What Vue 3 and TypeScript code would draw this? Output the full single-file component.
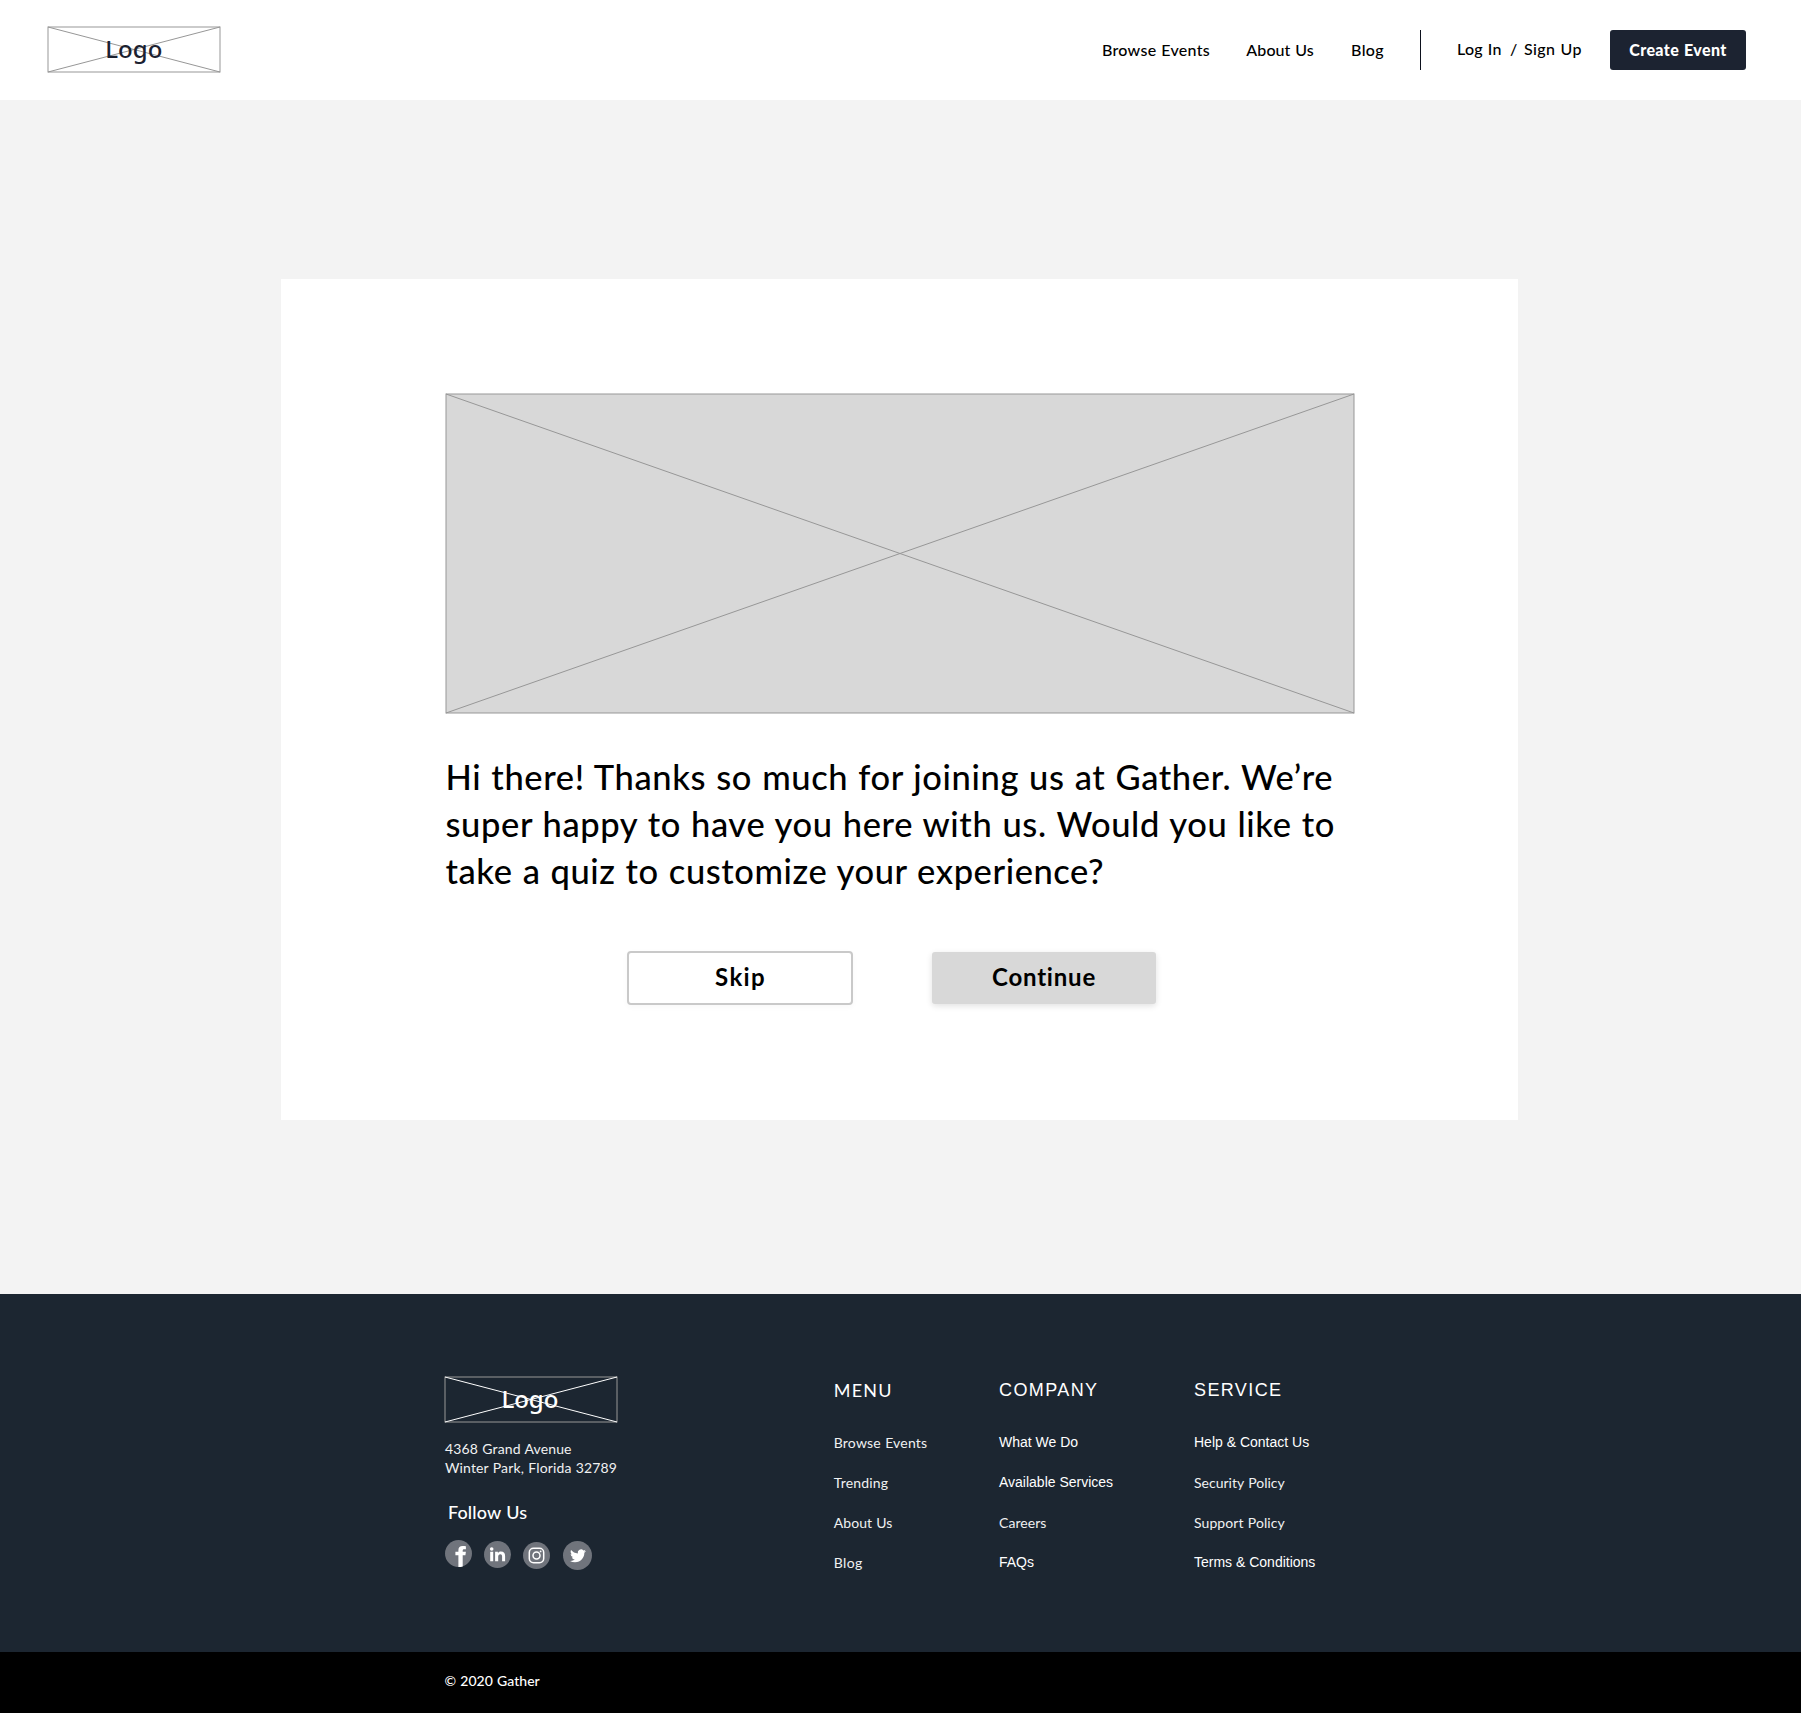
<script setup lang="ts">
interface FooterLink {
  label: string
  alt?: boolean
  spacing?: number
}

interface FooterColumn {
  title: string
  alt?: boolean
  links: FooterLink[]
}

const introLines = [
  { text: 'Hi there! Thanks so much for joining us at Gather. We’re', spacing: 0.6 },
  { text: 'super happy to have you here with us. Would you like to', spacing: 0.61 },
  { text: 'take a quiz to customize your experience?', spacing: 0.57 },
]

const columns: FooterColumn[] = [
  {
    title: 'MENU',
    links: [
      { label: 'Browse Events', spacing: 0.18 },
      { label: 'Trending', spacing: 0.18 },
      { label: 'About Us', spacing: 0.04 },
      { label: 'Blog', spacing: 0.35 },
    ],
  },
  {
    title: 'COMPANY',
    alt: true,
    links: [
      { label: 'What We Do', alt: true },
      { label: 'Available Services', alt: true },
      { label: 'Careers', spacing: 0.05 },
      { label: 'FAQs', alt: true },
    ],
  },
  {
    title: 'SERVICE',
    alt: true,
    links: [
      { label: 'Help & Contact Us', alt: true },
      { label: 'Security Policy', spacing: 0.02 },
      { label: 'Support Policy', spacing: 0.08 },
      { label: 'Terms & Conditions', alt: true },
    ],
  },
]
</script>

<template>
  <div class="page">
    <header class="header">
      <svg class="logo" width="174" height="47" viewBox="0 0 174 47">
        <rect x="1" y="1" width="172" height="45" />
        <path d="M1 1L173 46M173 1L1 46" />
        <text x="58.3" y="32">Logo</text>
      </svg>
      <nav class="nav">
        <a class="wide">Browse Events</a>
        <a class="about-link">About Us</a>
        <a class="blog">Blog</a>
        <span class="divider"></span>
        <a class="auth">Log In</a>
        <span class="auth">/</span>
        <a class="auth signup">Sign Up</a>
        <button class="create">Create Event</button>
      </nav>
    </header>

    <main class="main">
      <section class="card">
        <svg class="placeholder" width="910" height="321" viewBox="0 0 910 321">
          <rect x="1" y="1" width="908" height="319" />
          <path d="M1 1L909 320M909 1L1 320" />
        </svg>
        <p class="intro">
          <span v-for="line in introLines" :key="line.text" :style="{ letterSpacing: line.spacing + 'px' }">{{ line.text }}</span>
        </p>
        <div class="actions">
          <button class="btn skip">Skip</button>
          <button class="btn continue">Continue</button>
        </div>
      </section>
    </main>

    <footer class="footer">
      <div class="about">
        <svg class="logo light" width="174" height="47" viewBox="0 0 174 47">
          <rect x="1" y="1" width="172" height="45" />
          <path d="M1 1L173 46M173 1L1 46" />
          <text x="57.4" y="32">Logo</text>
        </svg>
        <address class="address">
          <span>4368 Grand Avenue</span>
          <span>Winter Park, Florida 32789</span>
        </address>
        <div class="follow">Follow Us</div>
        <div class="social">
          <svg width="27" height="27" viewBox="0 0 27 27">
            <circle cx="13.5" cy="13.5" r="13.5" />
            <path d="M13.4 27V15.3h-3v-3.6h3V10c0-2.7 1.6-4 4.1-4 1.2 0 2.3.1 3.4.2v3.1h-1.7c-1.2 0-1.5.6-1.5 1.5v.9h3.2l-.5 3.6h-2.7V26.4C16.3 26.8 14.9 27 13.4 27z" />
          </svg>
          <svg width="27" height="27" viewBox="0 0 27 27">
            <circle cx="13.5" cy="13.5" r="13.5" />
            <circle class="glyph" cx="7.7" cy="8" r="1.8" />
            <path d="M6.2 10.8h3V20.2h-3zM11.1 10.8h2.8v1.3c.5-.9 1.5-1.5 3-1.5 3 0 4.2 1.7 4.2 4.5V20.2h-3v-4.7c0-1.3-.4-2.3-1.7-2.3-1.5 0-2.2.9-2.2 2.4V20.2h-3.1z" />
          </svg>
          <svg width="27" height="27" viewBox="0 0 27 27">
            <circle cx="13.5" cy="13.5" r="13.5" />
            <rect class="line" x="6.3" y="6.3" width="14.4" height="14.4" rx="4.2" />
            <circle class="line" cx="13.5" cy="13.5" r="3.5" />
            <circle class="glyph" cx="17.6" cy="9.4" r="0.9" />
          </svg>
          <svg width="29" height="29" viewBox="0 0 29 29">
            <circle cx="14.5" cy="14.5" r="14.5" />
            <path transform="translate(7 6.9) scale(.665)" d="M23.953 4.57a10 10 0 01-2.825.775 4.958 4.958 0 002.163-2.723c-.951.555-2.005.959-3.127 1.184a4.92 4.92 0 00-8.384 4.482C7.69 8.095 4.067 6.13 1.64 3.162a4.822 4.822 0 00-.666 2.475c0 1.71.87 3.213 2.188 4.096a4.904 4.904 0 01-2.228-.616v.06a4.923 4.923 0 003.946 4.827 4.996 4.996 0 01-2.212.085 4.936 4.936 0 004.604 3.417 9.867 9.867 0 01-6.102 2.105c-.39 0-.779-.023-1.17-.067a13.995 13.995 0 007.557 2.209c9.053 0 13.998-7.496 13.998-13.985 0-.21 0-.42-.015-.63A9.935 9.935 0 0024 4.59z" />
          </svg>
        </div>
      </div>
      <div v-for="col in columns" :key="col.title" class="column">
        <h2 :class="{ alt: col.alt }">{{ col.title }}</h2>
        <ul>
          <li v-for="link in col.links" :key="link.label" :class="{ alt: link.alt }" :style="{ letterSpacing: (link.spacing ?? 0) + 'px' }">{{ link.label }}</li>
        </ul>
      </div>
    </footer>

    <div class="copyright">© 2020 Gather</div>
  </div>
</template>

<style>
body {
  margin: 0;
}
</style>

<style scoped>
.page {
  width: 1801px;
  height: 1713px;
  display: flex;
  flex-direction: column;
  overflow: hidden;
  background: #f3f3f3;
  color: #000;
  font-family: Lato, "Noto Sans", sans-serif;
  word-spacing: 0.6px;
}

button {
  font-family: inherit;
  word-spacing: inherit;
  margin: 0;
}

.header {
  box-sizing: border-box;
  flex: none;
  height: 100px;
  padding: 0 55px 0 47px;
  display: flex;
  justify-content: space-between;
  background: #fff;
}

.logo {
  display: block;
  margin-top: 26px;
  fill: none;
}

.logo rect {
  stroke: #979797;
}

.logo path {
  stroke: #979797;
}

.logo text {
  fill: #1b2130;
  font: 500 24px "Noto Sans", sans-serif;
}

.nav {
  display: grid;
  grid-template-columns: 145px 104px 69px 37px 53px 14px 86px 136px;
  align-items: center;
  font-size: 16px;
  font-weight: 500;
  line-height: 20px;
  white-space: nowrap;
}

.wide {
  letter-spacing: 0.28px;
}

.about-link {
  margin-left: -0.7px;
  letter-spacing: 0.1px;
}

.blog {
  letter-spacing: 0.4px;
}

.divider {
  width: 1px;
  height: 40px;
  background: #0c111d;
}

.auth {
  padding-bottom: 2px;
  letter-spacing: 0.25px;
}

.signup {
  letter-spacing: 0.4px;
}

.create {
  height: 40px;
  padding: 0 0 2px;
  border: 0;
  border-radius: 3px;
  background: #1c2331;
  color: #fff;
  font-size: 16px;
  font-weight: 900;
  letter-spacing: 0.4px;
}

.main {
  box-sizing: border-box;
  flex: none;
  height: 1194px;
  padding: 179px 283px 174px 281px;
}

.card {
  box-sizing: border-box;
  height: 841px;
  padding: 114px 0 0 164px;
  background: #fff;
}

.placeholder {
  display: block;
  fill: #d8d8d8;
  stroke: #979797;
}

.intro {
  margin: 39px 0 0;
  padding-left: 0.5px;
  display: flex;
  flex-direction: column;
  font-size: 34.5px;
  font-weight: 500;
  line-height: 47px;
  white-space: nowrap;
  word-spacing: 0.8px;
}

.actions {
  display: flex;
  align-items: center;
  gap: 79px;
  margin: 57px 0 0 182px;
}

.btn {
  box-sizing: border-box;
  padding: 0 0 3px;
  color: #000;
  font-size: 24px;
  font-weight: 700;
  border-radius: 3px;
}

.skip {
  width: 226px;
  height: 54px;
  padding-left: 1px;
  border: 2px solid #c9c9c9;
  border-radius: 4px;
  background: #fff;
  letter-spacing: 1.3px;
  box-shadow: 0 2px 6px rgba(0, 0, 0, 0.03);
}

.continue {
  width: 224px;
  height: 52px;
  border: 0;
  background: #d8d8d8;
  letter-spacing: 0.8px;
  box-shadow: 0 2px 6px rgba(0, 0, 0, 0.12);
}

.footer {
  box-sizing: border-box;
  flex: none;
  height: 358px;
  padding: 81px 0 0 444px;
  display: grid;
  grid-template-columns: 389.8px 165.2px 195px auto;
  background: #1c2631;
  color: #fff;
  white-space: nowrap;
}

.light {
  margin-top: 1px;
}

.light path {
  stroke: #fff;
}

.light text {
  fill: #fff;
}

.address {
  display: flex;
  flex-direction: column;
  margin: 16px 0 0 1px;
  color: #f0f1f2;
  font-size: 14px;
  font-style: normal;
  line-height: 19px;
  letter-spacing: 0.13px;
}

.follow {
  margin: 23px 0 16px 4px;
  font-size: 18px;
  font-weight: 500;
  line-height: 24px;
  letter-spacing: 0.12px;
}

.social {
  display: flex;
  align-items: flex-start;
  gap: 12px;
  margin-left: 1px;
  fill: #70747c;
}

.social svg:nth-child(2) {
  margin-top: 1px;
}

.social svg:nth-child(3) {
  margin-top: 2px;
}

.social svg:nth-child(4) {
  margin: 1px 0 0 1px;
}

.social path,
.social .glyph {
  fill: #fff;
}

.social .line {
  fill: none;
  stroke: #fff;
  stroke-width: 1.5px;
}

.column h2 {
  margin: 0 0 18px;
  font-size: 18px;
  font-weight: 400;
  line-height: 30px;
  letter-spacing: 1.2px;
}

.column h2.alt {
  letter-spacing: 1.4px;
}

.column ul {
  margin: 0;
  padding: 0;
  list-style: none;
  color: #f0f1f2;
  font-size: 14px;
  line-height: 40px;
}

.column li {
  height: 40px;
}

.alt {
  color: #fff;
  font-family: "Liberation Sans", Arial, sans-serif;
  word-spacing: 0;
}

.column li.alt {
  margin-top: -1px;
  padding-bottom: 1px;
}

.copyright {
  box-sizing: border-box;
  flex: none;
  height: 61px;
  padding: 18px 0 0 444.5px;
  background: #000;
  color: #fff;
  font-size: 14px;
  font-weight: 500;
  line-height: 21px;
  letter-spacing: 0.03px;
}
</style>
